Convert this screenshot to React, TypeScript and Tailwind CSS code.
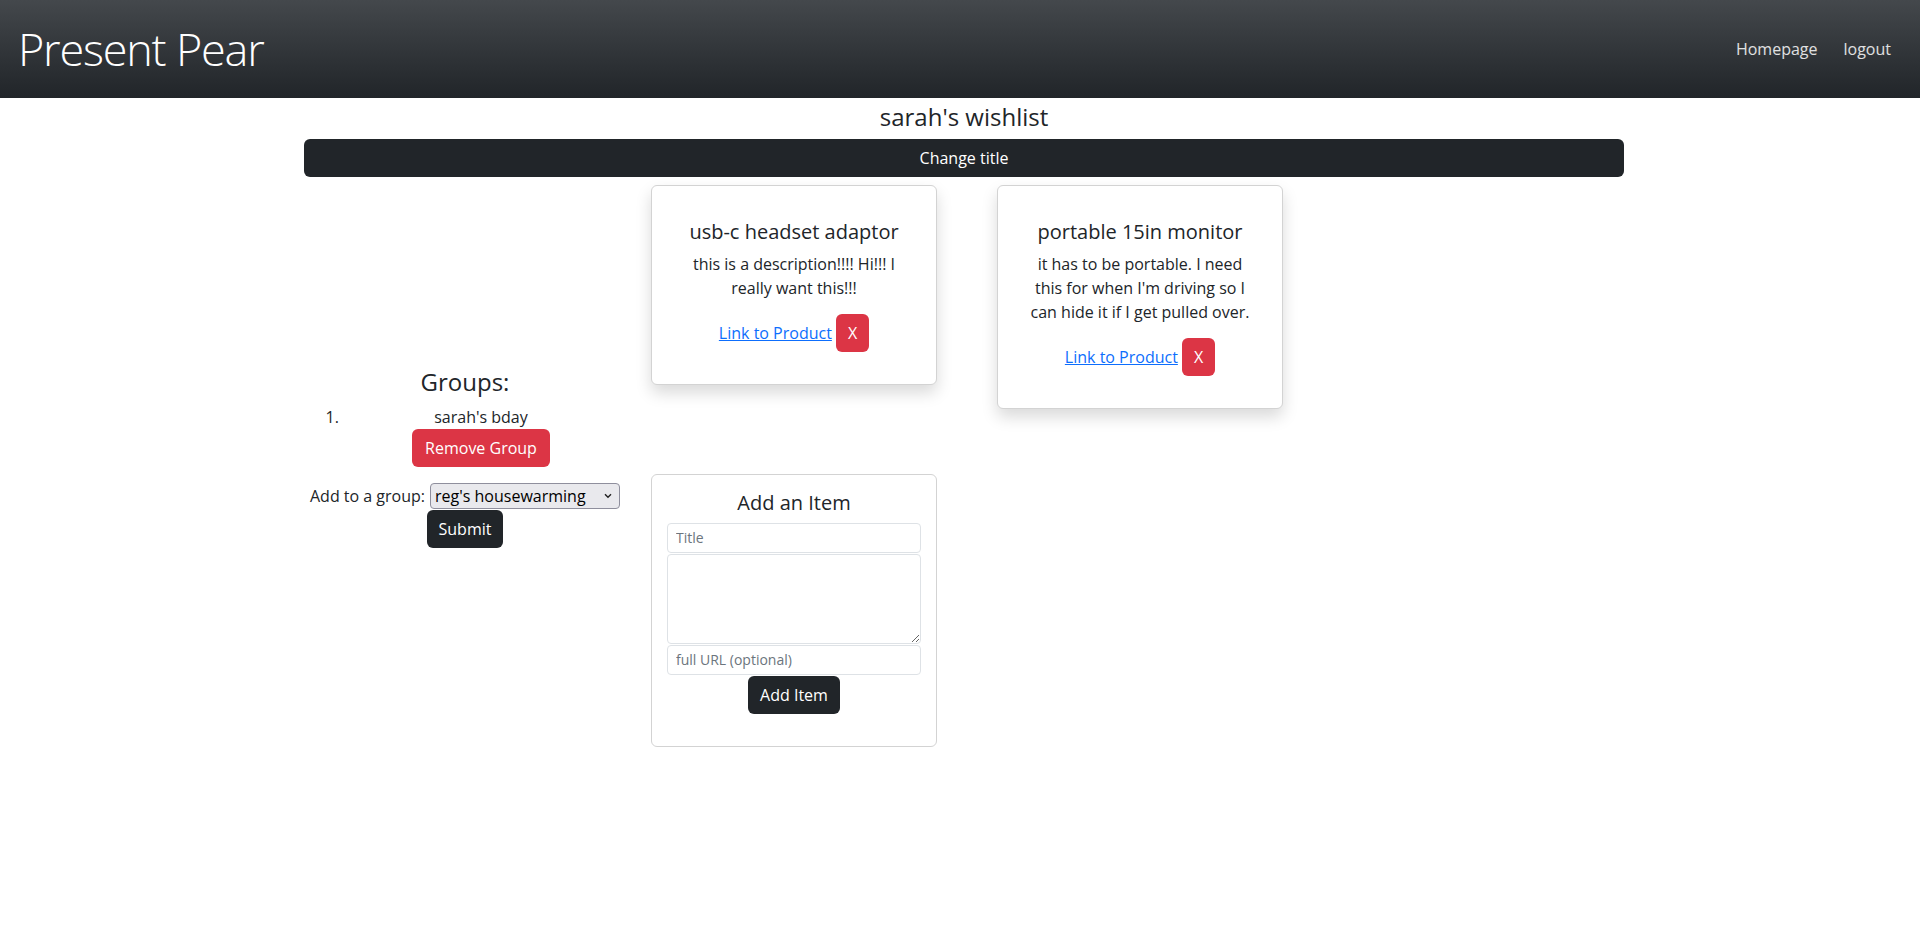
import React from 'react';

interface Item {
  title: string;
  description: string;
}

const items: Item[] = [
  { title: 'usb-c headset adaptor', description: 'this is a description!!!! Hi!!! I really want this!!!' },
  { title: 'portable 15in monitor', description: "it has to be portable. I need this for when I'm driving so I can hide it if I get pulled over." },
];

function ItemCard({ item }: { item: Item }) {
  return (
    <div className="w-[286px] rounded-[6px] border border-[#d3d3d3] bg-white p-[16px] shadow-[0_8px_16px_rgba(0,0,0,0.15)]">
      <div className="p-[16px] text-center">
        <h5 className="mt-[2px] mb-[8px] text-[20px] leading-[1.2]">{item.title}</h5>
        <p className="mb-[14px] text-[16px] leading-[24px]">{item.description}</p>
        <div className="flex items-baseline justify-center gap-[4px]">
          <a href="#" className="text-[16px] text-[#0d6efd] underline">Link to Product</a>
          <button className="h-[38px] rounded-[6px] bg-[#dc3545] px-[12px] text-[16px] text-white">X</button>
        </div>
      </div>
    </div>
  );
}

function AddItemCard() {
  return (
    <div className="w-[286px] rounded-[6px] border border-[#d3d3d3] bg-white px-[15px] pt-[16px] pb-[16px] text-center">
      <h5 className="mb-[8px] text-[20px] leading-[1.2]">Add an Item</h5>
      <div className="flex flex-col gap-[1px]">
        <input
          placeholder="Title"
          className="h-[30px] w-full rounded-[4px] border border-[#dee2e6] px-[8px] text-[14px] placeholder:text-[#6c757d]"
        />
        <textarea className="h-[90px] w-full rounded-[4px] border border-[#dee2e6] px-[8px] text-[14px]" />
        <input
          placeholder="full URL (optional)"
          className="h-[30px] w-full rounded-[4px] border border-[#dee2e6] px-[8px] text-[14px] placeholder:text-[#6c757d]"
        />
      </div>
      <button className="mx-auto mt-[1px] mb-[16px] block h-[38px] w-[92px] rounded-[6px] bg-[#212529] text-[16px] text-white">
        Add Item
      </button>
    </div>
  );
}

function GroupsPanel() {
  return (
    <div className="ml-[7px] w-[308px] shrink-0 pb-[16px] text-center">
      <h4 className="mb-[8px] text-[24px] leading-[1.2]">Groups:</h4>
      <ol className="mb-[16px] list-decimal pl-[32px]">
        <li>
          <div className="leading-[24px]">sarah's bday</div>
          <button className="h-[38px] rounded-[6px] bg-[#dc3545] px-[13px] text-[16px] text-white">Remove Group</button>
        </li>
      </ol>
      <div className="flex items-center justify-center gap-[5px]">
        <label className="shrink-0 whitespace-nowrap text-[16px] leading-[24px]">Add to a group:</label>
        <div className="relative shrink-0">
          <select className="block h-[26px] w-[190px] appearance-none rounded-[4px] border border-[#8f8f9d] bg-[#e9e9ed] pl-[4px] text-[16px] text-black">
            <option>reg's housewarming</option>
          </select>
          <svg className="pointer-events-none absolute right-[8px] top-[10px]" width="8" height="6" viewBox="0 0 8 6">
            <path d="M1 1.2L4 4.2L7 1.2" fill="none" stroke="#222" strokeWidth="1.4" />
          </svg>
        </div>
      </div>
      <button className="mx-auto mt-[1px] block h-[38px] w-[76px] rounded-[6px] bg-[#212529] text-[16px] text-white">Submit</button>
    </div>
  );
}

export default function App() {
  return (
    <div className="min-h-screen bg-white font-['Open_Sans',sans-serif] text-[#212529]">
      <nav className="flex h-[98px] items-center justify-between bg-linear-to-b from-[#44484c] to-[#212529] pl-[18px] pr-[29px]">
        <span className="text-[45px] font-light leading-[1.2] tracking-[-1.2px] text-white">Present Pear</span>
        <div className="flex gap-[26px] text-[16px] text-white/85">
          <a href="#">Homepage</a>
          <a href="#">logout</a>
        </div>
      </nav>
      <div className="ml-[304px] w-[1320px]">
        <h4 className="mt-[5px] mb-[7px] text-center text-[24px] leading-[1.2]">sarah's wishlist</h4>
        <button className="h-[38px] w-full rounded-[6px] bg-[#212529] text-[16px] text-white">Change title</button>
        <div className="mt-[8px] flex items-center">
          <GroupsPanel />
          <div className="flex flex-1 flex-wrap items-start gap-x-[60px] gap-y-[65px] pl-[32px]">
            {items.map((item) => (
              <ItemCard key={item.title} item={item} />
            ))}
            <AddItemCard />
          </div>
        </div>
      </div>
    </div>
  );
}
